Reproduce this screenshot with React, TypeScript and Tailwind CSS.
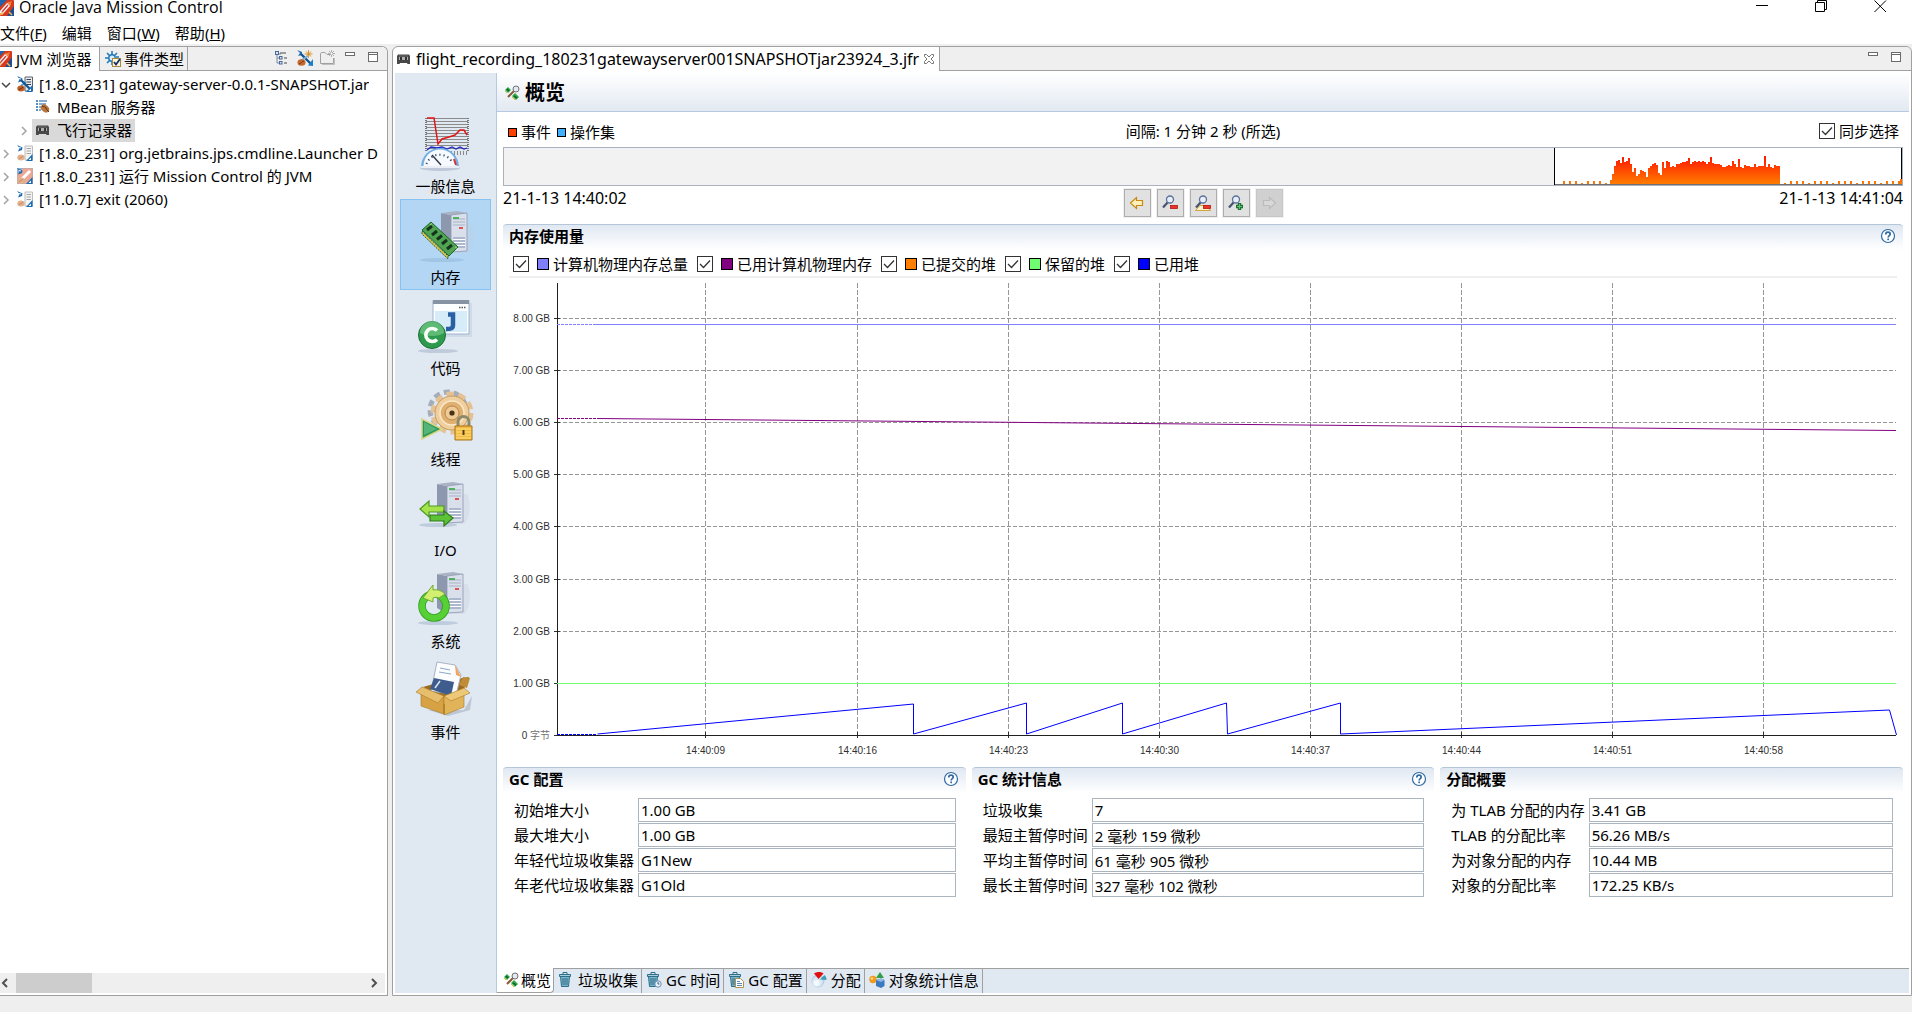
import { useLayoutEffect, useRef, useState } from "react";
import type { ReactNode } from "react";

/* ---------- helpers ---------- */

function useWidth<T extends HTMLElement>(initial: number) {
  const ref = useRef<T>(null);
  const [width, setWidth] = useState(initial);
  useLayoutEffect(() => {
    const el = ref.current;
    if (!el) return;
    const update = () => setWidth(el.clientWidth);
    update();
    const observer = new ResizeObserver(update);
    observer.observe(el);
    return () => observer.disconnect();
  }, []);
  return [ref, width] as const;
}

/* ---------- small icons ---------- */

function Icon({ children, className = "size-4" }: { children: ReactNode; className?: string }) {
  return (
    <svg viewBox="0 0 16 16" className={`${className} shrink-0`} fill="none" aria-hidden="true">
      {children}
    </svg>
  );
}

const MissionIcon = ({ className }: { className?: string }) => (
  <Icon className={className}>
    <rect width="16" height="16" rx="1" fill="#d8391c" />
    <path d="M0 0h9L0 9z" fill="#1f63ad" />
    <path d="M9 16h7V6z" fill="#1d4f8f" />
    <path d="M1 12 9 3l4-1-1 4-8 9z" fill="#f4f4f4" />
    <path d="M9 3l5-2-2 5z" fill="#f0803a" />
    <path d="M4 12 10 5" stroke="#c33" strokeWidth="1.2" />
    <path d="M2 15l3-3M11 12l3 3" stroke="#f7b54a" strokeWidth="1.5" />
  </Icon>
);

const EventTypesIcon = () => (
  <Icon>
    <path d="M7 0v4M2 2l3 3M0 7h4M2 12l3-3M12 2 9 5M7 14v-3M14 6h-3" stroke="#1f78b8" strokeWidth="1.5" />
    <circle cx="7" cy="7" r="3.2" fill="#d9ecf8" stroke="#1f78b8" strokeWidth="1.4" />
    <rect x="7.5" y="7.5" width="8" height="8" fill="#fdf6dc" stroke="#a98a3d" />
    <path d="m9 11 2 2.5L15 8" stroke="#12306b" strokeWidth="1.8" />
  </Icon>
);

const TreeIcon = () => (
  <Icon>
    <path d="M3 4v9h4M3 8h4M3 4h4" stroke="#7a8aa0" />
    <rect x="1.5" y="1.5" width="3" height="3" fill="#dce8f5" stroke="#47699a" />
    <rect x="5.5" y="6.5" width="2.5" height="2.5" fill="#dce8f5" stroke="#47699a" />
    <rect x="5.5" y="11.5" width="2.5" height="2.5" fill="#dce8f5" stroke="#47699a" />
    <path d="M6 3h6M10 8h3M10 13h3" stroke="#808080" strokeWidth="1.5" />
  </Icon>
);

const ConnectIcon = () => (
  <Icon>
    <circle cx="11.5" cy="4" r="2.8" fill="#fbe6ba" />
    <path d="M11.5 0v8M7.5 4h8M9 1.5l5 5M14 1.5l-5 5" stroke="#c98524" strokeWidth=".8" />
    <path d="M0 0l5 2v3L1 6l2-3z" fill="#1d6cb0" />
    <path d="M4 4l9.500 9.500" stroke="#14548f" strokeWidth="2.400" />
    <path d="M16 16V9l-5 6.500z" fill="#1d7fc7" />
    <path d="M3 11 11 6" stroke="#7fb2dc" strokeWidth="1.500" />
    <ellipse cx="4.500" cy="12.500" rx="4" ry="3.200" fill="#c4672c" />
    <path d="M2 14c2 0 3-3 5-3" stroke="#7c3510" />
  </Icon>
);

const NewFolderIcon = () => (
  <Icon>
    <path d="M.5 13.500V4c0-1 .5-1.500 1.500-1.500h3L7 4.500h3M13.500 8v5.500H.5" stroke="#a0a0a0" />
    <path d="M2 14.500h12.500V8" stroke="#c0c0c0" />
    <path d="M11.500 0v7M8 3.500h7M9 1l5 5M14 1 9 6" stroke="#a8a8a8" strokeWidth=".9" />
    <circle cx="11.500" cy="3.500" r="1" fill="#fff" />
  </Icon>
);

const PanelMinIcon = () => (
  <Icon>
    <rect x="2.500" y="2.500" width="9" height="3" fill="#fff" stroke="#6b6b6b" />
  </Icon>
);

const PanelMaxIcon = () => (
  <Icon>
    <rect x="2.500" y="2.500" width="9" height="9" fill="#fff" stroke="#6b6b6b" />
    <path d="M3 4.500h9" stroke="#6b6b6b" />
  </Icon>
);

function JvmIcon({ faded = false, self = false }: { faded?: boolean; self?: boolean }) {
  const pale = faded || self;
  return (
    <Icon>
      {self ? (
        <>
          <rect x=".5" y=".5" width="15" height="15" fill="#eba894" stroke="#c9a9a2" />
          <path d="M5 11 13 3" stroke="#fff" strokeWidth="3" />
          <path d="M0 0h6L0 6z" fill="#8db2d6" />
        </>
      ) : (
        <>
          <path d="M8 1h7.500v14H8z" fill={faded ? "#f4f4f4" : "#e9ecef"} stroke={faded ? "#bcbcbc" : "#59636e"} />
          <path d="M9.500 3.500h4.500M9.500 6h4.500M9.500 8.500h4.500" stroke={faded ? "#a5a5a5" : "#3b434c"} />
        </>
      )}
      <path d="M0 0l5.500 2.500L5 5 1 6.500 2.500 3z" fill="#1b6bb0" />
      <path d="M2 2.500 4 3" stroke="#fff" />
      {!pale && (
        <>
          <path d="M4 10 9 6" stroke="#4f9bd6" strokeWidth="2" />
          <path d="M4 4l10 10" stroke="#14548f" strokeWidth="2.200" />
        </>
      )}
      <path d="M15.500 9v7H9z" fill="#1b6bb0" />
      <path d="M14 12.500V15h-2.500z" fill="#fff" />
      <ellipse cx="4" cy="12.500" rx="3.700" ry="3" fill={pale ? "#e3b18d" : "#bd5f25"} />
      <path d="M2 14c1-2 3-1 4-3" stroke={pale ? "#c08d6d" : "#6d2e0e"} />
    </Icon>
  );
}

const MBeanIcon = () => (
  <Icon>
    <path d="M1 2h2M1 5h2M1 8h2M1 11h2" stroke="#1d6cb0" strokeWidth="1.600" />
    <path d="M4 2h8M4 5h7M4 8h3M4 11h2" stroke="#5d8fbd" strokeWidth="1.300" />
    <ellipse cx="10" cy="9.500" rx="4.600" ry="3.400" transform="rotate(38 10 9.500)" fill="#b8763f" />
    <path d="M7 7c2 1 3 0 4 2s1 2 3 4" stroke="#5f2f10" />
  </Icon>
);

const RecorderIcon = () => (
  <Icon>
    <path d="M2 3.500h11l1 1.500v8h-2.500l-.5-1H4l-.5 1H1V5z" fill="#484848" />
    <path d="M3 6h9v3H3z" fill="#b0b0b0" />
    <path d="M4 6h2v3H4zM9 6h2v3H9z" fill="#333" />
    <path d="M3 5h9" stroke="#6a6a6a" />
  </Icon>
);

const OverviewIcon = () => (
  <Icon>
    <path d="M1 5l3-3 3 3-3 3z" fill="#2fa84a" />
    <path d="M8 11l3-3 4 4-3 3z" fill="#2fa84a" />
    <path d="M3 4l2 2M10 11l3 2" stroke="#0e5c22" strokeWidth="1.500" />
    <path d="M1 6l2 2M8 12l3 3" stroke="#e3c13f" />
    <path d="M10 6 4 12" stroke="#8a5836" strokeWidth="2" />
    <circle cx="12" cy="4" r="3" fill="#e4e8f5" stroke="#707070" />
  </Icon>
);

function TrashIcon({ kind }: { kind?: "clock" | "page" }) {
  return (
    <Icon>
      <path d="M2.500 4.500h9l-1 10h-7z" fill="#7fb4c6" stroke="#2b6f8c" />
      <path d="M5 6v7M7 6v7M9 6v7" stroke="#2b6f8c" />
      <path d="M1.500 2.500h11v2h-11z" fill="#a8cfdb" stroke="#2b6f8c" />
      <path d="M5 2V.5h4V2" stroke="#2b6f8c" />
      {kind === "clock" && (
        <>
          <circle cx="12" cy="12" r="3.200" fill="#e9f2fa" stroke="#6b8fb5" />
          <path d="M12 10v2h1.500" stroke="#3d5d80" />
        </>
      )}
      {kind === "page" && (
        <>
          <path d="M7.500 6.500h5l3 3v6h-8z" fill="#fff" stroke="#b1924c" />
          <path d="M9 9.500h3M9 11.500h5M9 13.500h5" stroke="#5f86b5" />
        </>
      )}
    </Icon>
  );
}

const AllocIcon = () => (
  <Icon>
    <circle cx="7" cy="9" r="6.500" fill="#b7cfe5" />
    <circle cx="6.500" cy="9.500" r="5.300" fill="#dbe8f3" />
    <circle cx="5.500" cy="11" r="3" fill="#f4f9fd" />
    <path d="M7.500 7 3 1.500C6-.5 10-.5 12.500 1.500z" fill="#e01010" />
    <path d="M9 7.500 13.500 3c1.500 1.500 2 3 2 5z" fill="#3f9fb5" />
  </Icon>
);

const ObjectsIcon = () => (
  <Icon>
    <path d="M11 0 15 6H7z" fill="#2f9e46" />
    <circle cx="4" cy="7.500" r="3.700" fill="#f09a20" />
    <circle cx="3" cy="6.500" r="1.300" fill="#fcd68a" />
    <path d="M7 8l5-1.500 3.500 1.500v6L12 16l-5-2z" fill="#3a78bf" />
    <path d="M7 8l5-1.500L15.500 8 12 10z" fill="#8fb9e4" />
  </Icon>
);

const HelpIcon = () => (
  <svg viewBox="0 0 16 16" className="size-4" fill="none" aria-hidden="true">
    <circle cx="8" cy="8" r="6.500" fill="#fff" stroke="#2f6aa3" strokeWidth="1.200" />
    <path d="M5.800 6.400C5.800 4.900 6.700 4.200 8 4.200s2.200.8 2.200 2c0 1.500-2 1.500-2 3.200" stroke="#2f6aa3" strokeWidth="1.700" />
    <rect x="7.300" y="10.500" width="1.700" height="1.700" fill="#2f6aa3" />
  </svg>
);

function ArrowIcon({ dir }: { dir: "left" | "right" }) {
  const on = dir === "left";
  return (
    <Icon>
      <path
        d={on ? "M1.500 8 7.500 2.500v3h6v5h-6v3z" : "M14.500 8 8.500 2.500v3h-6v5h6v3z"}
        fill={on ? "#fdf0b8" : "#d4d4d4"}
        stroke={on ? "#c48a12" : "#b4b4b4"}
        strokeWidth="1.200"
      />
    </Icon>
  );
}

function ZoomIcon({ kind }: { kind: "out" | "range" | "in" }) {
  return (
    <Icon>
      {kind === "range" && <path d="M.5 15.500 5 10.500h7l3.500 5z" fill="#fdf3cd" stroke="#cfa53d" />}
      <path d="M6 7 1 12.500" stroke="#46556f" strokeWidth="2.200" />
      <circle cx="8" cy="4.500" r="3.500" fill="#e7effb" stroke="#5c7099" strokeWidth="1.300" />
      {kind === "in" ? (
        <>
          <path d="M11.500 8v7M8 11.500h7" stroke="#1d6e33" strokeWidth="3.400" />
          <path d="M11.500 9v5M9 11.500h5" stroke="#5fc274" strokeWidth="1.200" />
        </>
      ) : (
        <rect x="8.500" y="10.500" width="7" height="3" fill="#e8342b" stroke="#b2170f" strokeWidth=".8" />
      )}
    </Icon>
  );
}

/* ---------- sidebar drawings ---------- */

function Server({ x, y }: { x: number; y: number }) {
  return (
    <g transform={`translate(${x} ${y})`}>
      <path d="M10 12h20c4 6 4 24-3 30H8z" fill="#c3cddc" opacity=".35" />
      <path d="M0 2 10 4v38L0 36z" fill="#8d98ae" />
      <path d="M0 2 16 0l10 2-16 2z" fill="#a9b3c4" />
      <path d="M10 4 26 2v38l-16 1z" fill="#d9e0ec" stroke="#8d98ae" strokeWidth=".8" />
      <path d="M12 8h12M12 11h12M12 14h12" stroke="#a8b2c4" />
      <path d="M12 7h6" stroke="#2faa3c" strokeWidth="1.600" />
      <path d="M18 17h4" stroke="#d8322c" strokeWidth="1.600" />
      <path d="M12 27h12M12 30h12M12 33h12M12 36h12" stroke="#8090ad" strokeWidth="1.200" />
      <path d="M12 28.500h12M12 31.500h12M12 34.500h12" stroke="#fff" />
    </g>
  );
}

function Art({ children }: { children: ReactNode }) {
  return (
    <svg viewBox="0 0 64 64" className="size-16" fill="none" aria-hidden="true">
      {children}
    </svg>
  );
}

const GeneralArt = () => (
  <Art>
    <path
      d="M12 9.500h42M12 12.500h42M12 15.500h42M12 18.500h42M12 21.500h42M12 24.500h42M12 27.500h42M12 30.500h42M12 33.500h42M12 36.500h42M12 39.500h42"
      stroke="#8a8a8a"
    />
    <path d="M12 9v34M54 9v34" stroke="#777" strokeDasharray="1 1" strokeWidth="2" />
    <path d="M34 44h20" stroke="#888" strokeWidth="4" strokeDasharray="1 2" />
    <path d="M13 9h7l4 26 4-5 7-2 6-2 5-5h4l3 5" stroke="#e31414" strokeWidth="1.500" />
    <path d="m13 41 4-3 6 1 5-1 5 2 5-2 4 2 4-2 4 2 3-1" stroke="#2226c8" strokeWidth="1.300" />
    <ellipse cx="26" cy="59" rx="20" ry="3" fill="#9aa9bf" opacity=".5" />
    <path d="M7 58a19 19 0 0 1 38 0z" fill="#6eaee0" />
    <path d="M9.500 57a16.500 16.500 0 0 1 33 0z" fill="#f6f9fd" />
    <path d="M12.500 55a14 14 0 0 1 26-1" stroke="#3d4d66" strokeWidth="2" strokeDasharray="1.200 3" />
    <path d="M40 50l2 6" stroke="#d62b2b" strokeWidth="2" />
    <path d="m18 46 9 10" stroke="#303846" strokeWidth="1.400" />
    <path d="M7 58h38" stroke="#e9eef5" strokeWidth="2" />
  </Art>
);

const MemoryArt = () => (
  <Art>
    <ellipse cx="28" cy="60" rx="22" ry="2" fill="#8fb3d6" opacity=".5" />
    <Server x={27} y={11} />
    <path d="m8 30 9-8 27 25-9 9z" fill="#4fa552" stroke="#22642a" />
    <path d="m8 31 26 25v3L8 34z" fill="#d9c24d" stroke="#2e6b2c" strokeDasharray="2 1" />
    <path d="m13 30 5-4M18 35l5-4M23 39.500l5-4M28 44l5-4M33 49l5-4" stroke="#15331c" strokeWidth="3" />
    <path d="m16 25 2-1.500M41 47l2 1" stroke="#a5dc8a" />
  </Art>
);

const CodeArt = () => (
  <Art>
    <path d="M20 12h38v34H20z" fill="#c5d2e2" opacity=".6" />
    <path d="M19 9.500h36V43H19z" fill="#fdfeff" stroke="#9db4ce" />
    <path d="M19 9h36v4H19z" fill="#8792a3" />
    <path d="M45 16.500h7" stroke="#555" strokeWidth="1.600" strokeDasharray="1.500 1" />
    <path d="M21 20h32v21H21z" fill="#d7ecf9" />
    <path d="M34 23.500h5V34c0 4-3 4-7 4" stroke="#2b5fa3" strokeWidth="4.500" />
    <ellipse cx="24" cy="60" rx="20" ry="2" fill="#a9b6c9" opacity=".6" />
    <circle cx="18" cy="44" r="13.500" fill="#2e9a4d" stroke="#1c7036" />
    <path d="M6 42a12 12 0 0 1 24 0c-6 4-18 4-24 0z" fill="#7fd08f" opacity=".6" />
    <path d="M23 39.500a6.500 6.500 0 1 0 0 9" stroke="#f7fff8" strokeWidth="3.600" />
  </Art>
);

const ThreadArt = () => (
  <Art>
    <circle cx="34" cy="28" r="18" stroke="#a4adb9" strokeWidth="5" strokeDasharray="6 4" />
    <circle cx="38" cy="31" r="19" stroke="#e5c294" strokeWidth="5" strokeDasharray="7.300 4.640" />
    <circle cx="38" cy="31" r="17" fill="#f0cf9e" stroke="#c79a5e" />
    <circle cx="38" cy="31" r="12" fill="#dfb06f" stroke="#fbe9cb" strokeWidth="1.500" />
    <circle cx="38" cy="31" r="7" fill="#eecb97" stroke="#b98647" />
    <circle cx="38" cy="31" r="2.600" fill="#4a2f16" />
    <path d="M8 37v20l20-10z" fill="#2f9858" stroke="#d8d884" strokeWidth="1.500" />
    <path d="M10 40v13l13-6z" fill="#6fc68d" opacity=".6" />
    <path d="M44 45v-5a5.500 5.500 0 0 1 11 0v5" stroke="#8b8a6d" strokeWidth="3" />
    <path d="M41 44h17v14H41z" fill="#f3bb3d" stroke="#a8741a" />
    <path d="M42 47h15M42 50h15M42 53h15M42 56h15" stroke="#fbe08c" />
    <path d="M49.500 48v5" stroke="#5a3b0a" strokeWidth="2" />
  </Art>
);

const IoArt = () => (
  <Art>
    <ellipse cx="24" cy="52" rx="19" ry="2" fill="#a9b9cf" opacity=".6" />
    <Server x={23} y={9} />
    <path d="M6 36l9-8v5h15v6H15v5z" fill="#a6e24c" stroke="#4b9a22" strokeWidth="1.200" />
    <path d="M39 45l-9-7v4H16v6h14v5z" fill="#5cc236" stroke="#2f7d1d" strokeWidth="1.200" />
  </Art>
);

const SystemArt = () => (
  <Art>
    <ellipse cx="24" cy="59" rx="20" ry="2" fill="#a9b9cf" opacity=".6" />
    <Server x={23} y={8} />
    <circle cx="20" cy="42" r="12" stroke="#2e9b1e" strokeWidth="7.500" />
    <circle cx="20" cy="42" r="12" stroke="#56d034" strokeWidth="6" />
    <path d="M9 34 19 21v5c5-1 9 1 12 4l-6 4c-2-1-4-1-6 0v4z" fill="#d3ef72" stroke="#6cab31" />
  </Art>
);

const EventArt = () => (
  <Art>
    <path d="M14 55h36l8-14-2 14-22 6z" fill="#98a4b6" opacity=".5" />
    <path d="M9 32 30 26l25-4-5 12-20 8z" fill="#9a6a1e" />
    <path d="M49 22l7 1-3 10-8-3z" fill="#c08c36" />
    <path d="m23 7 18 3 6 10-5 20-25-4z" fill="#fbfdff" stroke="#a7b4c6" />
    <path d="m41 10 1 10 5 2z" fill="#f2a35e" />
    <path d="m26 13 10 2M25 17l12 2" stroke="#8ea6c8" />
    <path d="m20 23 20 4-3 14-21-7z" fill="#3e5d8e" />
    <path d="m21 33 5-7" stroke="#d9e6f5" strokeWidth="1.500" />
    <path d="M7 35l23 7v17L7 51z" fill="#d6a244" stroke="#a97a25" strokeWidth=".6" />
    <path d="M30 42l20-7v17l-20 8z" fill="#e2b45a" stroke="#a97a25" strokeWidth=".6" />
    <path d="M2 37l6-5 22 9-6 7z" fill="#e7be6c" stroke="#a97a25" strokeWidth=".6" />
    <path d="M30 41l20-8 6 5-19 8z" fill="#edc878" stroke="#a97a25" strokeWidth=".6" />
    <path d="M30 49v10" stroke="#b5852c" strokeWidth="2" />
  </Art>
);

/* ---------- common controls ---------- */

function Check({ children }: { children: ReactNode }) {
  return (
    <label className="flex items-center">
      <span className="grid size-4 shrink-0">
        <input
          type="checkbox"
          defaultChecked
          className="peer col-start-1 row-start-1 size-4 appearance-none border border-[#333] bg-white"
        />
        <svg
          viewBox="0 0 16 16"
          fill="none"
          aria-hidden="true"
          className="pointer-events-none invisible col-start-1 row-start-1 size-4 peer-checked:visible"
        >
          <path d="m3 8 3.500 3.500L13 4.500" stroke="#333" strokeWidth="1.300" />
        </svg>
      </span>
      {children}
    </label>
  );
}

function SectionHeader({ title, help = true }: { title: string; help?: boolean }) {
  return (
    <div className="flex h-[26px] items-center justify-between rounded-t border-t border-[#b4c6da] bg-linear-to-b from-[#e0e8f2] to-white pr-[7px] pb-1 pl-1.5">
      <h2 className="font-bold">{title}</h2>
      {help && (
        <button type="button" aria-label="帮助">
          <HelpIcon />
        </button>
      )}
    </div>
  );
}

/* ---------- left panel ---------- */

function Chevron({ open = false }: { open?: boolean }) {
  return (
    <svg viewBox="0 0 12 12" className="size-3" fill="none" aria-hidden="true">
      <path d={open ? "m2 4 4 4 4-4" : "m4 2 4 4-4 4"} stroke={open ? "#444" : "#a3a3a3"} strokeWidth="1.500" />
    </svg>
  );
}

type TreeRow = { label: string; icon: ReactNode; expand?: "open" | "closed"; nested?: boolean; selected?: boolean };

const tree: TreeRow[] = [
  { label: "[1.8.0_231] gateway-server-0.0.1-SNAPSHOT.jar", icon: <JvmIcon />, expand: "open" },
  { label: "MBean 服务器", icon: <MBeanIcon />, nested: true },
  { label: "飞行记录器", icon: <RecorderIcon />, expand: "closed", nested: true, selected: true },
  { label: "[1.8.0_231] org.jetbrains.jps.cmdline.Launcher D", icon: <JvmIcon faded />, expand: "closed" },
  { label: "[1.8.0_231] 运行 Mission Control 的 JVM", icon: <JvmIcon self />, expand: "closed" },
  { label: "[11.0.7] exit (2060)", icon: <JvmIcon faded />, expand: "closed" },
];

function Browser() {
  return (
    <aside className="flex w-[388px] shrink-0 flex-col rounded-tr-md border-t border-r border-b border-[#a0a0a0] bg-white">
      <div className="flex h-6 shrink-0">
        <button type="button" className="flex w-[99px] items-center gap-1 overflow-hidden whitespace-nowrap">
          <MissionIcon className="-ml-1 size-4" />
          JVM 浏览器
        </button>
        <button
          type="button"
          className="flex items-center gap-[3px] border-x border-b border-[#a0a0a0] bg-[#efefef] pr-[3px] pl-[5px] whitespace-nowrap"
        >
          <EventTypesIcon />
          事件类型
        </button>
        <div className="flex flex-1 items-start justify-end gap-[7px] rounded-tr-md border-b border-[#a0a0a0] bg-[#efefef] pt-[3px] pr-[5px]">
          <button type="button" aria-label="树布局"><TreeIcon /></button>
          <button type="button" aria-label="新建连接"><ConnectIcon /></button>
          <button type="button" aria-label="新建文件夹"><NewFolderIcon /></button>
          <button type="button" aria-label="最小化"><PanelMinIcon /></button>
          <button type="button" aria-label="最大化"><PanelMaxIcon /></button>
        </div>
      </div>
      <ul className="flex-1 overflow-hidden pt-[2px] pr-[2px]">
        {tree.map((row) => (
          <li key={row.label} className={`flex h-[23px] items-center ${row.nested ? "pl-[18px]" : ""}`}>
            <button type="button" aria-label="展开" className="mr-0.5 w-3 shrink-0">
              {row.expand && <Chevron open={row.expand === "open"} />}
            </button>
            <button
              type="button"
              className={`flex h-full min-w-0 items-center gap-1.5 px-[3px] pb-0.5 ${row.selected ? "bg-[#d9d9d9]" : ""}`}
            >
              {row.icon}
              <span className="overflow-hidden whitespace-nowrap">{row.label}</span>
            </button>
          </li>
        ))}
      </ul>
      <div className="mr-[2px] mb-[2px] flex h-5 shrink-0 items-center bg-[#efefef]">
        <button type="button" aria-label="向左滚动" className="w-4">
          <svg viewBox="0 0 12 12" className="size-3" fill="none"><path d="M7 2 3 6l4 4" stroke="#505050" strokeWidth="2" /></svg>
        </button>
        <div className="h-full w-[76px] bg-[#cdcdcd]" />
        <button type="button" aria-label="向右滚动" className="ml-auto w-4">
          <svg viewBox="0 0 12 12" className="size-3" fill="none"><path d="m3 2 4 4-4 4" stroke="#505050" strokeWidth="2" /></svg>
        </button>
      </div>
    </aside>
  );
}

/* ---------- range selector ---------- */

const burst = [
  4, 10, 18, 23, 24, 21, 27, 22, 23, 26, 20, 12, 16, 8, 10, 14, 13, 12, 7, 16, 18, 20, 21, 19, 11, 9, 22, 16, 23, 22, 17, 18,
  17, 20, 20, 21, 22, 22, 23, 26, 20, 22, 23, 22, 23, 22, 23, 22, 20, 22, 27, 21, 20, 20, 20, 19, 17, 17, 18, 19, 18,
  23, 20, 17, 25, 17, 16, 19, 18, 18, 17, 17, 20, 17, 18, 18, 18, 28, 17, 20, 17, 16, 19, 18, 18,
];

function RangeBar() {
  const [ref, width] = useWidth<HTMLDivElement>(347);
  const scale = width / 347;
  const bars: { x: number; h: number }[] = [];
  for (let i = 0; i < 8; i++) bars.push({ x: 8 + i * 6, h: i % 4 === 3 ? 1 : 3 });
  burst.forEach((h, i) => bars.push({ x: 55 + i * 2, h }));
  for (let i = 0; i < 20; i++) bars.push({ x: 229 + i * 6, h: i % 4 === 0 ? 1 : 3 });
  bars.push({ x: 345, h: 5 });
  return (
    <div className="flex h-[39px] border border-[#a9b3bf] bg-[#f2f2f2]">
      <div className="flex-[1051]" />
      <div ref={ref} className="min-w-0 flex-[347] border-x border-black bg-white">
        <svg width={width} height="37" className="block" aria-hidden="true" shapeRendering="crispEdges">
          <defs>
            <linearGradient id="heat" gradientUnits="userSpaceOnUse" x1="0" y1="8" x2="0" y2="37">
              <stop offset="0" stopColor="#ff1400" />
              <stop offset="1" stopColor="#ff8000" />
            </linearGradient>
          </defs>
          {bars.map((b, i) => (
            <rect key={i} x={Math.round(b.x * scale)} y={36 - b.h} width={Math.max(Math.ceil(2 * scale - 0.1), 1)} height={b.h} fill="url(#heat)" />
          ))}
          <path d={`M0 36.500H${width}`} stroke="#707070" />
        </svg>
      </div>
    </div>
  );
}

/* ---------- memory chart ---------- */

const PLOT_LEFT = 54;
const PLOT_TOP = 5;
const AXIS_Y = 457;
const GB = 52;

const times = [
  ["14:40:09", 148],
  ["14:40:16", 300],
  ["14:40:23", 451],
  ["14:40:30", 602],
  ["14:40:37", 753],
  ["14:40:44", 904],
  ["14:40:51", 1055],
  ["14:40:58", 1206],
] as const;

const usedHeap: [number, number][] = [
  [40, 456], [356, 426], [356, 456], [469, 425], [469, 456], [565, 425], [565, 456], [669, 425], [670, 456],
  [783, 425], [783, 456], [1332, 432], [1339, 457],
];

function MemoryChart() {
  const [ref, width] = useWidth<HTMLDivElement>(1400);
  const plotWidth = Math.max(width - PLOT_LEFT - 7, 100);
  const px = (v: number) => PLOT_LEFT + (v / 1339) * plotWidth;
  const right = PLOT_LEFT + plotWidth;
  const gx = (v: number) => Math.round(px(v)) + 0.5;
  const gy = (n: number) => Math.round(AXIS_Y - n * GB - n * 0.15) + 0.5;
  return (
    <div ref={ref} className="w-full">
      <svg width={width} height="489" className="block font-[Liberation_Sans,Noto_Sans_CJK_SC,sans-serif] text-[10px]" fill="none">
        {[1, 2, 3, 4, 5, 6, 7, 8].map((n) => (
          <path key={n} d={`M${PLOT_LEFT} ${gy(n)}H${right}`} stroke="#969696" strokeDasharray="4 2" />
        ))}
        {times.map(([label, v]) => (
          <g key={label}>
            <path d={`M${gx(v)} ${PLOT_TOP}V${AXIS_Y}`} stroke="#969696" strokeDasharray="5 2" />
            <path d={`M${gx(v)} ${AXIS_Y - 3}v6`} stroke="#303030" />
            <text x={gx(v)} y="476" textAnchor="middle" fill="#303030">{label}</text>
          </g>
        ))}
        {[0, 1, 2, 3, 4, 5, 6, 7, 8].map((n) => (
          <g key={n}>
            <path d={`M${PLOT_LEFT - 3} ${gy(n)}h6`} stroke="#303030" />
            <text x={PLOT_LEFT - 7} y={gy(n) + 3.5} textAnchor="end" fill="#303030">
              {n === 0 ? <>0 <tspan fill="#707070">字节</tspan></> : `${n}.00 GB`}
            </text>
          </g>
        ))}
        <path d={`M${PLOT_LEFT + 0.5} ${PLOT_TOP}V${AXIS_Y + 1}`} stroke="#202020" />
        <path d={`M${PLOT_LEFT} ${AXIS_Y + 0.5}H${right}`} stroke="#202020" />
        <g strokeWidth="1">
          <path d={`M${PLOT_LEFT} 46.500h40`} stroke="#8080ff" strokeDasharray="3 1" />
          <path d={`M${px(38)} 46.500H${right}`} stroke="#8080ff" />
          <path d={`M${PLOT_LEFT} 140.500H${px(40)}`} stroke="#800080" strokeDasharray="3 1" />
          <path d={`M${px(40)} 140.500L${right} 152.500`} stroke="#800080" />
          <path d={`M${PLOT_LEFT} 405.500H${right}`} stroke="#70ff70" />
          <path d={`M${PLOT_LEFT} 456.500H${px(40)}`} stroke="#0000ff" strokeDasharray="3 1" />
          <polyline points={usedHeap.map(([x, y]) => `${px(x) + 0.5},${y}`).join(" ")} stroke="#0000ff" />
        </g>
      </svg>
    </div>
  );
}

const legend = [
  ["计算机物理内存总量", "bg-[#8080ff]"],
  ["已用计算机物理内存", "bg-[#800080]"],
  ["已提交的堆", "bg-[#ff8000]"],
  ["保留的堆", "bg-[#70ff70]"],
  ["已用堆", "bg-[#0000ff]"],
] as const;

/* ---------- detail sections ---------- */

const details: { title: string; help: boolean; rows: [string, string][] }[] = [
  {
    title: "GC 配置",
    help: true,
    rows: [["初始堆大小", "1.00 GB"], ["最大堆大小", "1.00 GB"], ["年轻代垃圾收集器", "G1New"], ["年老代垃圾收集器", "G1Old"]],
  },
  {
    title: "GC 统计信息",
    help: true,
    rows: [["垃圾收集", "7"], ["最短主暂停时间", "2 毫秒 159 微秒"], ["平均主暂停时间", "61 毫秒 905 微秒"], ["最长主暂停时间", "327 毫秒 102 微秒"]],
  },
  {
    title: "分配概要",
    help: false,
    rows: [["为 TLAB 分配的内存", "3.41 GB"], ["TLAB 的分配比率", "56.26 MB/s"], ["为对象分配的内存", "10.44 MB"], ["对象的分配比率", "172.25 KB/s"]],
  },
];

function Details() {
  return (
    <div className="grid grid-cols-3 gap-1.5">
      {details.map((d, s) => (
        <section key={d.title}>
          <SectionHeader title={d.title} help={d.help} />
          <div className="grid grid-cols-[auto_1fr] items-center gap-x-1 gap-y-px pt-[5px] pr-2.5 pl-[11px]">
            {d.rows.map(([label, value], i) => (
              <div key={label} className="contents">
                <label htmlFor={`f${s}-${i}`} className="whitespace-nowrap">{label}</label>
                <input
                  id={`f${s}-${i}`}
                  readOnly
                  defaultValue={value}
                  className="h-6 w-full min-w-0 border border-[#abb5c0] bg-white px-0.5 outline-none"
                />
              </div>
            ))}
          </div>
        </section>
      ))}
    </div>
  );
}

/* ---------- editor ---------- */

const pages: [string, ReactNode][] = [
  ["一般信息", <GeneralArt />],
  ["内存", <MemoryArt />],
  ["代码", <CodeArt />],
  ["线程", <ThreadArt />],
  ["I/O", <IoArt />],
  ["系统", <SystemArt />],
  ["事件", <EventArt />],
];

const tabs: [string, ReactNode][] = [
  ["概览", <OverviewIcon />],
  ["垃圾收集", <TrashIcon />],
  ["GC 时间", <TrashIcon kind="clock" />],
  ["GC 配置", <TrashIcon kind="page" />],
  ["分配", <AllocIcon />],
  ["对象统计信息", <ObjectsIcon />],
];

const rangeTools: [string, ReactNode, boolean][] = [
  ["后退", <ArrowIcon dir="left" />, false],
  ["缩小", <ZoomIcon kind="out" />, false],
  ["显示全部", <ZoomIcon kind="range" />, false],
  ["放大", <ZoomIcon kind="in" />, false],
  ["前进", <ArrowIcon dir="right" />, true],
];

function Editor() {
  return (
    <main className="flex min-w-0 flex-1 flex-col rounded-t-md border border-[#a0a0a0] bg-white">
      <div className="flex h-6 shrink-0">
        <div className="flex items-center gap-1 pr-1 pl-[3px]">
          <RecorderIcon />
          <span className="text-base leading-5 whitespace-nowrap">flight_recording_180231gatewayserver001SNAPSHOTjar23924_3.jfr</span>
          <button type="button" aria-label="关闭">
            <svg viewBox="0 0 12 12" className="size-3" fill="none">
              <path d="M1.500 1.500h2L6 4l2.500-2.500h2v2L8 6l2.500 2.500v2h-2L6 8l-2.500 2.500h-2v-2L4 6 1.500 3.500z" fill="#fff" stroke="#777" />
            </svg>
          </button>
        </div>
        <div className="flex flex-1 items-start justify-end gap-[7px] rounded-tr-md border-b border-l border-[#a0a0a0] bg-[#efefef] pt-[3px] pr-1.5">
          <button type="button" aria-label="最小化"><PanelMinIcon /></button>
          <button type="button" aria-label="最大化"><PanelMaxIcon /></button>
        </div>
      </div>
      <div className="flex min-h-0 flex-1 p-[2px]">
        <nav className="flex w-[102px] shrink-0 flex-col items-center border-r border-[#b7c9de] bg-[#e0e8f2] pt-[35px]">
          {pages.map(([label, art], i) => (
            <button
              key={label}
              type="button"
              className={`flex h-[91px] w-[91px] flex-col items-center border ${
                i === 1 ? "border-[#88c2f2] bg-[#b2d6f4]" : "border-transparent"
              }`}
            >
              {art}
              <span className="mt-0.5 leading-[22px]">{label}</span>
            </button>
          ))}
        </nav>
        <div className="flex min-w-0 flex-1 flex-col">
          <div className="flex h-[39px] shrink-0 items-center gap-[5px] border-b border-[#b7c9de] bg-linear-to-b from-white to-[#e2e9f2] pt-0.5 pl-[7px]">
            <OverviewIcon />
            <h1 className="text-[20px] font-bold">概览</h1>
          </div>
          <div className="flex min-h-0 flex-1 flex-col px-1.5">
            <div className="grid h-[35px] shrink-0 grid-cols-[1fr_auto_1fr] items-center pt-1">
              <div className="flex items-center pt-px pl-[5px]">
                <span className="size-[9px] border border-black bg-[#ff4000]" />
                <span className="ml-1">事件</span>
                <span className="ml-1.5 size-[9px] border border-black bg-[#40b0ff]" />
                <span className="ml-1">操作集</span>
              </div>
              <span className="pb-0.5">间隔: 1 分钟 2 秒 (所选)</span>
              <div className="flex justify-end pr-1 pb-0.5">
                <Check>
                  <span className="ml-1">同步选择</span>
                </Check>
              </div>
            </div>
            <RangeBar />
            <div className="grid h-[38px] shrink-0 grid-cols-[1fr_auto_1fr] items-start pt-[2px]">
              <span className="text-base leading-5">21-1-13 14:40:02</span>
              <div className="flex gap-1">
                {rangeTools.map(([label, icon, disabled]) => (
                  <button
                    key={label}
                    type="button"
                    aria-label={label}
                    disabled={disabled}
                    className="flex h-[30px] w-[29px] items-center justify-center border border-[#f0f0f0] disabled:opacity-90"
                  >
                    <span
                      className={`flex h-7 w-[27px] items-center justify-center border ${
                        disabled ? "border-[#c2c2c2] bg-[#cccccc]" : "border-[#adadad] bg-[#e1e1e1]"
                      }`}
                    >
                      {icon}
                    </span>
                  </button>
                ))}
              </div>
              <span className="text-right text-base leading-5">21-1-13 14:41:04</span>
            </div>
            <section>
              <SectionHeader title="内存使用量" />
              <div className="mx-1.5 flex h-7 items-center gap-[9px] border-b-2 border-[#efefef] pt-0.5 pl-1">
                {legend.map(([label, color]) => (
                  <Check key={label}>
                    <span className={`ml-2 size-3 border border-black ${color}`} />
                    <span className="ml-1 whitespace-nowrap">{label}</span>
                  </Check>
                ))}
              </div>
              <MemoryChart />
            </section>
            <Details />
          </div>
          <div className="flex h-[25px] shrink-0 bg-[#e0e8f2]">
            {tabs.map(([label, icon], i) => (
              <button
                key={label}
                type="button"
                className={`flex items-center whitespace-nowrap border-r border-[#a0a0a0] ${
                  i === 0 ? "gap-0.5 rounded-br border-b bg-white pr-0.5 pl-1.5" : "gap-1 border-t pr-[3px] pb-0.5 pl-1"
                }`}
              >
                {icon}
                {label}
              </button>
            ))}
            <div className="flex-1 border-t border-[#a0a0a0]" />
          </div>
        </div>
      </div>
    </main>
  );
}

/* ---------- window ---------- */

const menus: [string, string][] = [["文件", "F"], ["编辑", ""], ["窗口", "W"], ["帮助", "H"]];

export default function App() {
  return (
    <div className="flex h-screen flex-col overflow-hidden bg-[#efefef] font-[Noto_Sans,Noto_Sans_CJK_SC,sans-serif] text-[15px] leading-5 text-black">
      <header className="flex h-[22px] shrink-0 items-start bg-white">
        <MissionIcon className="-ml-0.5 size-4" />
        <h1 className="ml-[5px] font-[Open_Sans,sans-serif] text-base leading-[14px]">Oracle Java Mission Control</h1>
        <div className="ml-auto flex gap-[46px] pr-[25px]">
          <button type="button" aria-label="最小化窗口">
            <svg viewBox="0 0 13 13" className="size-[13px]"><path d="M0 5.500h12" stroke="#000" /></svg>
          </button>
          <button type="button" aria-label="还原窗口">
            <svg viewBox="0 0 13 13" className="size-[13px]" fill="none">
              <path d="M.5 2.500h9v9h-9zM2.500 2V.5h9v9H10" stroke="#000" />
            </svg>
          </button>
          <button type="button" aria-label="关闭窗口">
            <svg viewBox="0 0 13 13" className="size-[13px]"><path d="m.5.5 11.500 11.500M12 .5.5 12" stroke="#000" /></svg>
          </button>
        </div>
      </header>
      <nav className="flex h-[22px] shrink-0 items-center gap-[15px] bg-white">
        {menus.map(([label, key]) => (
          <button key={label} type="button">
            {label}
            {key && <>(<u>{key}</u>)</>}
          </button>
        ))}
      </nav>
      <div className="flex min-h-0 flex-1 gap-1 pt-0.5 pb-4">
        <Browser />
        <Editor />
      </div>
    </div>
  );
}
